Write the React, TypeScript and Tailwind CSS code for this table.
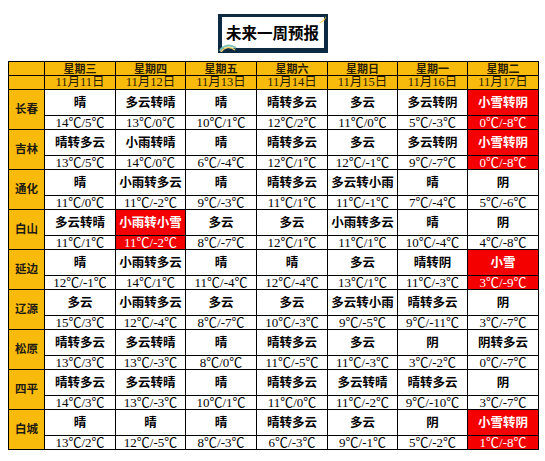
import React from "react";

type Day = { w: string; t: string; hot?: boolean };

const days = [
  ["星期三", "11月11日"],
  ["星期四", "11月12日"],
  ["星期五", "11月13日"],
  ["星期六", "11月14日"],
  ["星期日", "11月15日"],
  ["星期一", "11月16日"],
  ["星期二", "11月17日"],
];

const d = (w: string, hi: number, lo: number, hot = false): Day => ({
  w,
  t: `${hi}℃/${lo}℃`,
  hot,
});

const cities: [string, Day[]][] = [
  ["长春", [d("晴", 14, 5), d("多云转晴", 13, 0), d("晴", 10, 1), d("晴转多云", 12, 2), d("多云", 11, 0), d("多云转阴", 5, -3), d("小雪转阴", 0, -8, true)]],
  ["吉林", [d("晴转多云", 13, 5), d("小雨转晴", 14, 0), d("晴", 6, -4), d("晴转多云", 12, 1), d("多云", 12, -1), d("多云转阴", 9, -7), d("小雪转阴", 0, -8, true)]],
  ["通化", [d("晴", 11, 0), d("小雨转多云", 11, -2), d("晴", 9, -3), d("晴转多云", 11, 1), d("多云转小雨", 11, -1), d("晴", 7, -4), d("阴", 5, -6)]],
  ["白山", [d("多云转晴", 11, 1), d("小雨转小雪", 11, -2, true), d("多云", 8, -7), d("多云", 12, 1), d("小雨转多云", 11, 1), d("晴", 10, -4), d("阴", 4, -8)]],
  ["延边", [d("晴", 12, -1), d("小雨转多云", 14, 1), d("晴", 11, -4), d("晴", 12, -4), d("多云", 13, 1), d("晴转阴", 11, -3), d("小雪", 3, -9, true)]],
  ["辽源", [d("多云", 15, 3), d("小雨转多云", 12, -4), d("多云", 8, -7), d("多云", 10, -3), d("多云转小雨", 9, -5), d("晴转多云", 9, -11), d("阴", 3, -7)]],
  ["松原", [d("晴转多云", 13, 3), d("多云转晴", 13, -3), d("晴", 8, 0), d("晴转多云", 11, -5), d("多云", 11, -3), d("阴", 3, -2), d("阴转多云", 0, -7)]],
  ["四平", [d("晴转多云", 14, 3), d("多云转晴", 13, -3), d("晴", 10, 1), d("晴转多云", 11, 0), d("多云转晴", 11, -2), d("晴转多云", 9, -10), d("阴", 3, -7)]],
  ["白城", [d("晴", 13, 2), d("晴", 12, -5), d("晴", 8, -3), d("晴转多云", 6, -3), d("多云", 9, -1), d("阴", 5, -2), d("小雪转阴", 1, -8, true)]],
];

const colW = ["w-[71px]", "w-[70px]", "w-[71px]", "w-[71px]", "w-[70px]", "w-[70px]", "w-[71px]"];

const Title = () => (
  <div className="relative mx-auto w-[110px] h-[39px] bg-[#0c2b42] pt-[3px] pl-[4px] pr-[4px] pb-[5px]">
    <div className="h-full w-full bg-white flex items-center justify-center">
      <span className="text-[15.5px] font-semibold text-black leading-none [font-family:'Noto_Sans_CJK_SC',sans-serif]">
        未来一周预报
      </span>
    </div>
    {/* corner decorations */}
    <svg className="absolute right-[1px] top-[1px]" width="10" height="10" viewBox="0 0 10 10">
      <path d="M9 1 C9 5 6 8 1 8 C4 7 7 5 9 1 Z" fill="#f2c94c" />
    </svg>
    <svg className="absolute left-[1px] bottom-[1px]" width="18" height="10" viewBox="0 0 18 10">
      <path d="M1 9 C4 3 11 2 17 6" stroke="#7fc3b6" strokeWidth="2" fill="none" />
      <path d="M2 10 C5 5 11 4 16 8" stroke="#f3d36b" strokeWidth="1.5" fill="none" />
    </svg>
  </div>
);

export default function App() {
  return (
    <div className="w-[545px] h-[461px] bg-white pt-[14px]">
      <Title />
      <table className="ml-[8px] mt-[8px] border-collapse table-fixed w-[530px] text-black">
        <colgroup>
          <col className="w-[36px]" />
          {colW.map((c, i) => (
            <col key={i} className={c} />
          ))}
        </colgroup>
        <thead className="bg-[#f8bb0c]">
          <tr className="h-[14px]">
            <th className="border border-black p-0"></th>
            {days.map(([w]) => (
              <th
                key={w}
                className="border border-black p-0 text-[11px] leading-none font-bold text-[#2a1d00] [font-family:'Noto_Sans_CJK_SC',sans-serif]"
              >
                {w}
              </th>
            ))}
          </tr>
          <tr className="h-[13px]">
            <th className="border border-black p-0"></th>
            {days.map(([w, dt]) => (
              <th
                key={w}
                className="border border-black p-0 text-[12.5px] leading-none font-normal text-[#2a1d00] align-bottom [font-family:'Liberation_Serif','Noto_Sans_CJK_SC',serif]"
              >
                {dt}
              </th>
            ))}
          </tr>
        </thead>
        <tbody>
          {cities.map(([city, row]) => (
            <React.Fragment key={city}>
              <tr className="h-[26px]">
                <td
                  rowSpan={2}
                  className="border border-black p-0 bg-[#f8bb0c] text-center text-[11.5px] font-bold text-[#1f1a10] [font-family:'Noto_Sans_CJK_SC',sans-serif]"
                >
                  {city}
                </td>
                {row.map((c, i) => (
                  <td
                    key={i}
                    className={`border border-black p-0 text-center text-[12.5px] leading-none font-bold [font-family:'Noto_Sans_CJK_SC',sans-serif] ${
                      c.hot ? "bg-[#f50000] text-white" : "bg-white"
                    }`}
                  >
                    {c.w}
                  </td>
                ))}
              </tr>
              <tr className="h-[14px]">
                {row.map((c, i) => (
                  <td
                    key={i}
                    className={`border border-black p-0 text-center align-bottom text-[13px] leading-none whitespace-nowrap [font-family:'Liberation_Serif','Noto_Sans_CJK_SC',serif] ${
                      c.hot ? "bg-[#f50000] text-white" : "bg-white"
                    }`}
                  >
                    {c.t}
                  </td>
                ))}
              </tr>
            </React.Fragment>
          ))}
        </tbody>
      </table>
    </div>
  );
}
